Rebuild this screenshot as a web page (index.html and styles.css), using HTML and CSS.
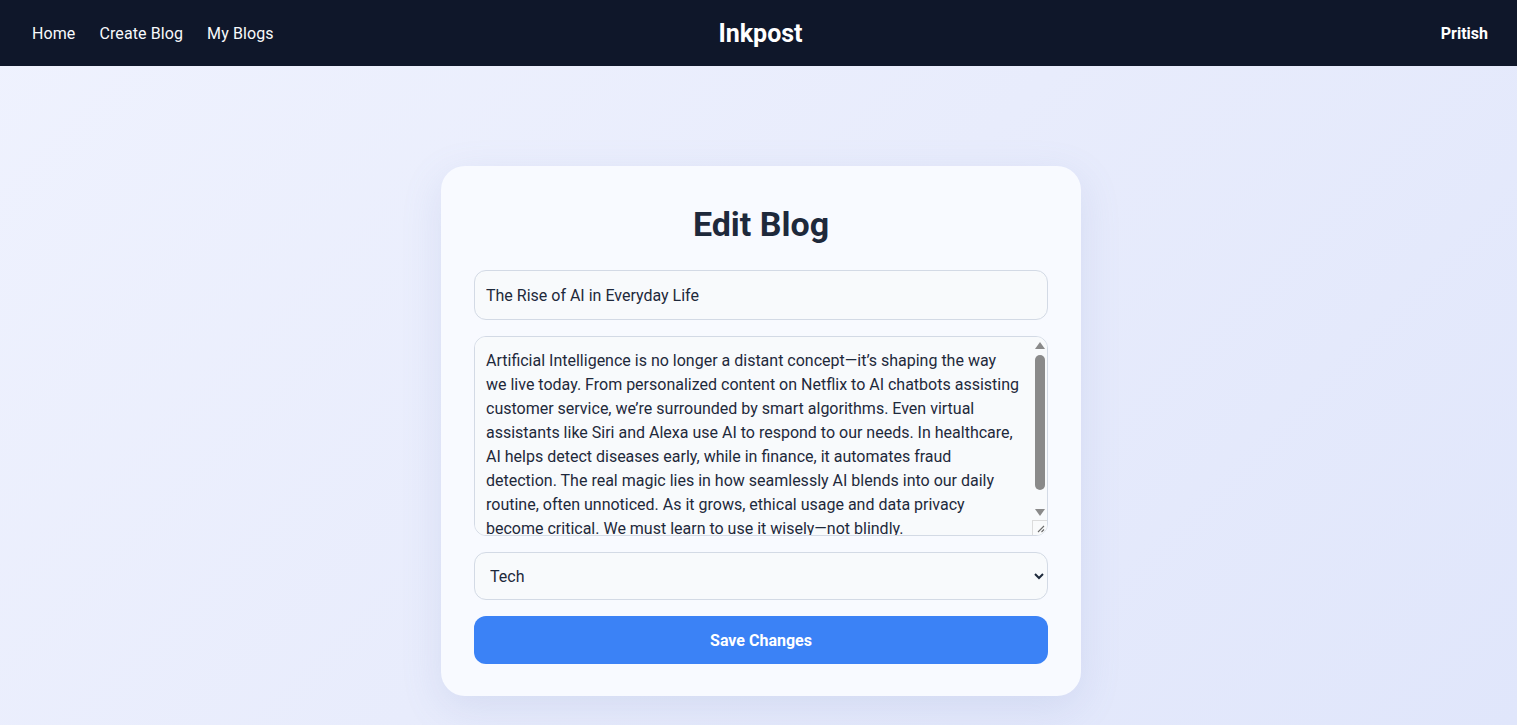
FILE: index.html
```html
<!DOCTYPE html>
<html lang="en">
<head>
<meta charset="utf-8">
<title>Inkpost - Edit Blog</title>
<link rel="stylesheet" href="styles.css">
</head>
<body>
<header class="navbar">
  <nav class="nav-links">
    <a href="#" class="nav-link">Home</a>
    <a href="#" class="nav-link">Create Blog</a>
    <a href="#" class="nav-link">My Blogs</a>
  </nav>
  <div class="brand">Inkpost</div>
  <div class="user">Pritish</div>
</header>
<main class="page">
  <form class="card">
    <h1 class="card-title">Edit Blog</h1>
    <input class="field" type="text" value="The Rise of AI in Everyday Life">
    <div class="textarea-wrap">
      <textarea class="field textarea">Artificial Intelligence is no longer a distant concept—it’s shaping the way we live today. From personalized content on Netflix to AI chatbots assisting customer service, we’re surrounded by smart algorithms. Even virtual assistants like Siri and Alexa use AI to respond to our needs. In healthcare, AI helps detect diseases early, while in finance, it automates fraud detection. The real magic lies in how seamlessly AI blends into our daily routine, often unnoticed. As it grows, ethical usage and data privacy become critical. We must learn to use it wisely—not blindly.</textarea>
      <div class="scrollbar" aria-hidden="true">
        <span class="sb-arrow sb-up"></span>
        <span class="sb-thumb"></span>
        <span class="sb-arrow sb-down"></span>
      </div>
      <span class="resizer" aria-hidden="true">
        <svg width="8" height="8" viewBox="0 0 8 8"><path d="M7 1 L1 7 M7 4.5 L4.5 7" stroke="#6b6b6b" stroke-width="1.1" fill="none"/></svg>
      </span>
    </div>
    <select class="field select">
      <option selected>Tech</option>
      <option>Lifestyle</option>
      <option>Travel</option>
    </select>
    <button type="button" class="btn">Save Changes</button>
  </form>
</main>
</body>
</html>
```
FILE: styles.css
```css
* { box-sizing: border-box; }
html, body { height: 100%; }
body {
  margin: 0;
  font-family: Roboto, "Noto Sans", sans-serif;
  background: linear-gradient(135deg, #eff2fe 0%, #e8ecfc 50%, #e0e6fb 100%);
  color: #1e293b;
}
.navbar {
  height: 66px;
  background: #0f172a;
  display: grid;
  grid-template-columns: 1fr auto 1fr;
  align-items: center;
  padding: 0 29px 0 32px;
  color: #fff;
}
.nav-links { display: flex; gap: 24px; }
.nav-link {
  color: #f8fafc;
  text-decoration: none;
  font-size: 16px;
  font-weight: 400;
  letter-spacing: 0.1px;
}
.brand {
  font-size: 25px;
  font-weight: 700;
  padding-left: 1px;
}
.user {
  justify-self: end;
  font-size: 16px;
  font-weight: 700;
}
.page {
  display: flex;
  justify-content: center;
  padding: 100px 0 0 5px;
}
.card {
  width: 640px;
  background: #f8faff;
  border-radius: 24px;
  padding: 32px 33px;
  box-shadow: 0 12px 40px rgba(120, 135, 190, 0.16);
  display: flex;
  flex-direction: column;
  gap: 16px;
}
.card-title {
  margin: 0 0 4px;
  text-align: center;
  font-size: 34px;
  line-height: 52px;
  font-weight: 700;
  color: #1e293b;
}
.field {
  width: 100%;
  border: 1px solid #d3dae5;
  border-radius: 12px;
  background: #f8fafc;
  font-family: inherit;
  font-size: 16px;
  color: #1e293b;
  padding: 12px;
  outline: none;
}
input.field { height: 50px; padding-left: 11px; }
.textarea-wrap {
  position: relative;
}
.textarea {
  display: block;
  height: 200px;
  line-height: 24px;
  padding-left: 11px;
  padding-right: 27px;
  resize: none;
  overflow-y: scroll;
  scrollbar-width: none;
  color: #1e293b;
}
.textarea::-webkit-scrollbar { display: none; }
.scrollbar {
  position: absolute;
  top: 1px;
  right: 1px;
  width: 14px;
  height: 183px;
  display: flex;
  flex-direction: column;
  align-items: center;
  padding-top: 5px;
}
.sb-arrow {
  width: 0;
  height: 0;
  border-left: 5px solid transparent;
  border-right: 5px solid transparent;
}
.sb-up { border-bottom: 7px solid #8a8a8a; }
.sb-down { border-top: 7px solid #8a8a8a; margin-top: 19px; }
.sb-thumb {
  width: 10px;
  height: 135px;
  margin-top: 6px;
  border-radius: 5px;
  background: #8a8a8a;
}
.resizer {
  position: absolute;
  right: 1px;
  bottom: 1px;
  width: 15px;
  height: 15px;
  background: #f9fafb;
  border-left: 1px solid #dcdcdc;
  border-top: 1px solid #dcdcdc;
  display: flex;
  align-items: flex-end;
  justify-content: flex-end;
  padding: 0 2px 2px 0;
  border-bottom-right-radius: 10px;
}
.resizer svg { display: block; }
.select {
  height: 48px;
  padding: 0 11px;
}
.btn {
  height: 48px;
  border: none;
  border-radius: 12px;
  background: #3b82f6;
  color: #fff;
  font-family: inherit;
  font-size: 16px;
  font-weight: 700;
  cursor: pointer;
}
```
